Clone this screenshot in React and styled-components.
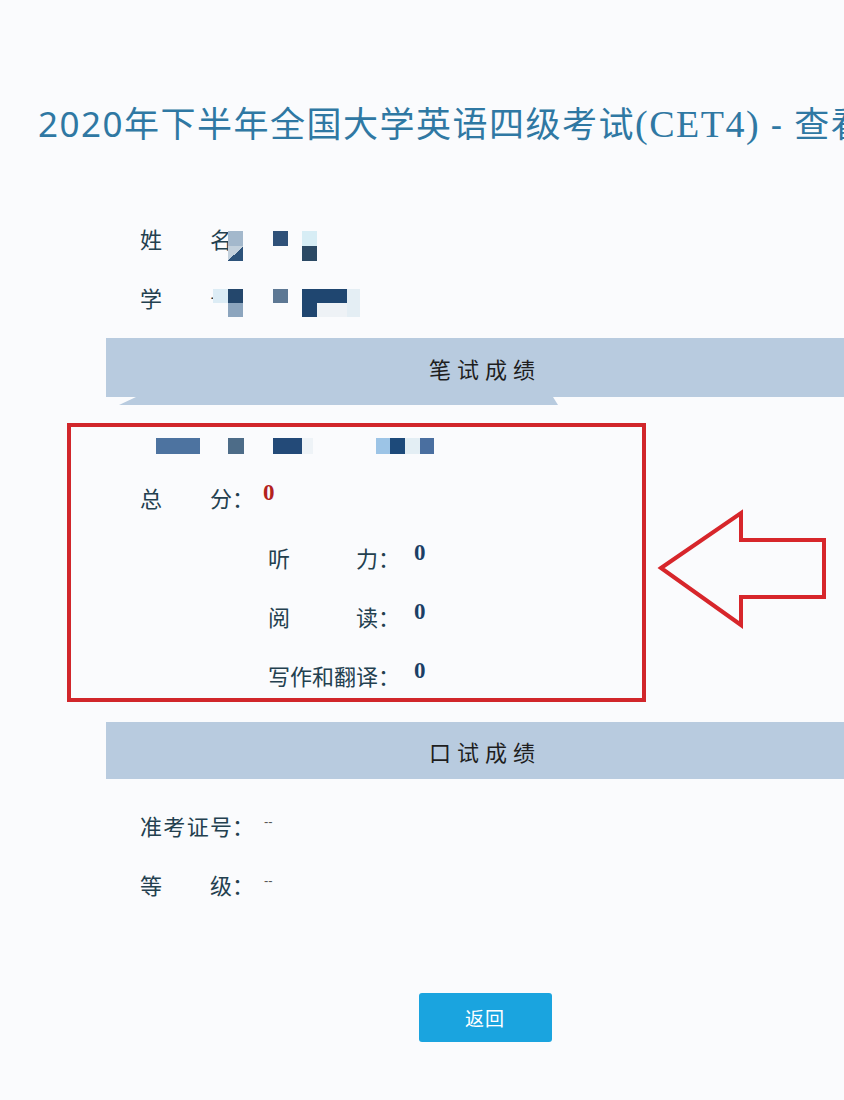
import styled, { createGlobalStyle } from "styled-components";

const BG = "#fafbfd";

const GlobalStyle = createGlobalStyle`
  body {
    margin: 0;
    background: ${BG};
  }
`;

const Page = styled.div`
  width: 844px;
  min-height: 1100px;
  overflow: hidden;
  font-family: "Noto Sans CJK SC", "Noto Sans", sans-serif;
  color: #23404f;
`;

const Title = styled.h1`
  margin: 0;
  padding: 104px 0 0 38px;
  font-family: "Noto Sans", "Noto Sans CJK SC", sans-serif;
  font-weight: 400;
  font-size: 35px;
  line-height: 40px;
  letter-spacing: 1.5px;
  color: #2f78a3;
  white-space: nowrap;
`;

const TitleLatin = styled.span`
  font-family: "Liberation Serif", serif;
  font-size: 38px;
`;

const Content = styled.div`
  margin-left: 106px;
  width: 758px;
  display: flex;
  flex-direction: column;
`;

const InfoList = styled.div`
  display: flex;
  flex-direction: column;
  gap: 29px;
  margin-top: ${(p) => p.$top}px;
  padding-left: ${(p) => p.$left}px;
`;

const Row = styled.div`
  display: flex;
  align-items: flex-start;
  height: 30px;
  line-height: 30px;
  font-size: 22px;
`;

const Label = styled.span`
  display: flex;
  justify-content: space-between;
  width: ${(p) => p.$w}px;
`;

const Colon = styled.span`
  width: 22px;
`;

const Value = styled.span`
  margin-left: ${(p) => p.$gap}px;
  margin-top: -4px;
  font-family: "Liberation Serif", serif;
  font-weight: 700;
  font-size: 23px;
  color: ${(p) => (p.$red ? "#b3221e" : "#1b3f66")};
`;

const Dash = styled.span`
  margin-left: 10px;
  margin-top: -3px;
  font-family: "Liberation Sans", sans-serif;
  font-size: 13px;
  color: #555;
`;

const Band = styled.div`
  height: ${(p) => p.$h}px;
  margin-top: ${(p) => p.$top}px;
  background: #b8cbdf;
  display: flex;
  align-items: center;
  justify-content: center;
  font-size: 22px;
  letter-spacing: 6px;
  color: #1e1e1e;
`;

const Lip = styled.div`
  margin-left: 13px;
  width: 439px;
  height: 8px;
  background: #b8cbdf;
  clip-path: polygon(17px 0, 434px 0, 100% 100%, 0 100%);
`;

const ScoreArea = styled.div`
  display: flex;
  align-items: flex-start;
  margin: 18px 0 0 -39px;
`;

const RedBox = styled.div`
  box-sizing: border-box;
  width: 579px;
  height: 279px;
  border: 4px solid #d1262b;
  padding: 11px 0 0 0;
  display: flex;
  flex-direction: column;
`;

const ArrowMark = styled.svg`
  margin: 85px 0 0 10px;
  flex-shrink: 0;
`;

const MosaicWrap = styled.div`
  position: relative;
  display: flex;
  flex-direction: column;
  margin-top: ${(p) => p.$top || 0}px;
  margin-left: ${(p) => p.$left || 0}px;
`;

const MosaicRow = styled.div`
  display: flex;
  height: ${(p) => p.$h}px;
`;

const Cell = styled.span`
  width: ${(p) => p.$w}px;
  background: ${(p) => p.$c};
`;

const Button = styled.button`
  align-self: center;
  margin-top: 94px;
  width: 133px;
  height: 49px;
  border: none;
  border-radius: 3px;
  background: #1aa4df;
  color: #fff;
  font-family: "Noto Sans CJK SC", sans-serif;
  font-size: 19px;
  letter-spacing: 1px;
  cursor: pointer;
`;

const Mosaic = ({ rows, h, top, left }) => (
  <MosaicWrap $top={top} $left={left}>
    {rows.map((cells, i) => (
      <MosaicRow key={i} $h={h}>
        {cells.map(([w, c], j) => (
          <Cell key={j} $w={w} $c={c} />
        ))}
      </MosaicRow>
    ))}
  </MosaicWrap>
);

const T = "transparent";

const nameMosaic = [
  [[15, "#a3b8cc"], [15, BG], [15, BG], [15, "#2f5179"], [14, BG], [15, "#d7edf5"]],
  [[15, "linear-gradient(135deg, #c2d0dc 50%, #2c527a 50%)"], [15, BG], [15, BG], [15, T], [14, T], [15, "#2b4964"]],
];

const idMosaic = [
  [[15, "#dcecf5"], [15, "#24476c"], [30, BG], [15, "#5d7894"], [14, T], [45, "#1f4670"], [13, "#e4eef4"]],
  [[15, BG], [15, "#8ca5be"], [30, BG], [15, T], [14, T], [15, "#1f4670"], [30, "#eef2f6"], [13, "#e4eef4"]],
];

const boxMosaic = [
  [
    [44, "#4d73a0"], [28, T], [16, "#4d6c88"], [29, T], [29, "#234a78"], [11, "#eef3f7"],
    [63, T], [14, "#9cc4e6"], [15, "#1d4a7a"], [15, "#e3eef4"], [14, "#4a6fa0"],
  ],
];

const Chars = ({ text, w }) => (
  <Label $w={w}>
    {text.split("").map((ch, i) => (
      <span key={i}>{ch}</span>
    ))}
  </Label>
);

const subScores = [
  { label: "听力", value: 0 },
  { label: "阅读", value: 0 },
  { label: "写作和翻译", value: 0 },
];

export default function App() {
  return (
    <Page>
      <GlobalStyle />
      <Title>
        2020年下半年全国大学英语四级考试<TitleLatin>(CET4)</TitleLatin> - 查看成绩
      </Title>
      <Content>
        <InfoList $top={79} $left={34}>
          <Row>
            <Chars text="姓名" w={92} />
            <Colon>：</Colon>
            <Mosaic rows={nameMosaic} h={15} top={8} left={-26} />
          </Row>
          <Row>
            <Chars text="学号" w={92} />
            <Colon>：</Colon>
            <Mosaic rows={idMosaic} h={14} top={7} left={-41} />
          </Row>
        </InfoList>

        <Band $h={59} $top={26}>笔试成绩</Band>
        <Lip />

        <ScoreArea>
          <RedBox>
            <Mosaic rows={boxMosaic} h={16} left={85} />
            <InfoList $top={28} $left={69}>
              <Row>
                <Chars text="总分" w={92} />
                <Colon>：</Colon>
                <Value $red $gap={9}>0</Value>
              </Row>
            </InfoList>
            <InfoList $top={30} $left={197}>
              {subScores.map((s) => (
                <Row key={s.label}>
                  <Chars text={s.label} w={110} />
                  <Colon>：</Colon>
                  <Value $gap={14}>{s.value}</Value>
                </Row>
              ))}
            </InfoList>
          </RedBox>
          <ArrowMark width="174" height="122" viewBox="0 0 174 122">
            <polygon
              points="5,60 85,5 85,32 168,32 168,89 85,89 85,117"
              fill="none"
              stroke="#d7262b"
              strokeWidth="4"
              strokeLinejoin="miter"
            />
          </ArrowMark>
        </ScoreArea>

        <Band $h={57} $top={20}>口试成绩</Band>

        <InfoList $top={31} $left={34}>
          <Row>
            <Chars text="准考证号" w={92} />
            <Colon>：</Colon>
            <Dash>--</Dash>
          </Row>
          <Row>
            <Chars text="等级" w={92} />
            <Colon>：</Colon>
            <Dash>--</Dash>
          </Row>
        </InfoList>

        <Button>返回</Button>
      </Content>
    </Page>
  );
}
